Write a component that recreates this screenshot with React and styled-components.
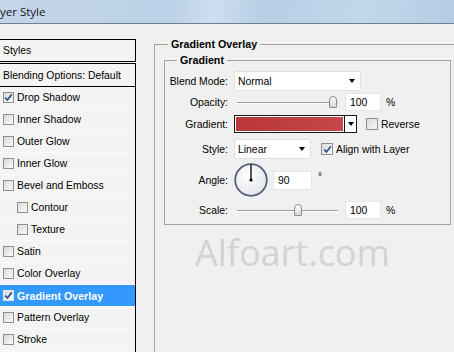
import styled, { createGlobalStyle } from "styled-components";

const GlobalStyle = createGlobalStyle`
  html, body { margin: 0; padding: 0; }
  body {
    width: 454px;
    height: 352px;
    overflow: hidden;
    background: #f0f0f0;
    font-family: "Liberation Sans", Arial, sans-serif;
    font-size: 10.4px;
    color: #000;
  }
`;

const Window = styled.div`
  width: 454px;
  height: 352px;
  display: flex;
  flex-direction: column;
  overflow: hidden;
`;

const TitleBar = styled.div`
  flex: none;
  height: 23px;
  border-bottom: 1px solid #6f7f8e;
  background: linear-gradient(100deg, #c3d5e9 0%, #bcd1e7 38%, #cddef0 47%, #b8cee5 58%, #c3d7eb 80%, #b6cbe3 100%);
  display: flex;
  align-items: center;
  font-family: "Open Sans", sans-serif;
  font-size: 11.5px;
  color: #151515;
`;

const Body = styled.div`
  flex: 1;
  min-height: 0;
  display: flex;
`;

const LeftCol = styled.div`
  flex: none;
  width: 136px;
  padding-top: 15px;
  display: flex;
  flex-direction: column;
`;

const HeadBox = styled.div`
  box-sizing: border-box;
  height: ${(p) => p.$h}px;
  margin-top: ${(p) => p.$mt || 0}px;
  border: 1px solid #000;
  border-left: none;
  background: #f4f4f4;
  display: flex;
  align-items: center;
  padding-left: 3px;
`;

const EffectList = styled.div`
  flex: 1;
  border-right: 1px solid #000;
  background: #f4f4f4;
`;

const EffectRow = styled.div`
  box-sizing: border-box;
  height: 22px;
  display: flex;
  align-items: center;
  gap: 3px;
  padding-left: ${(p) => (p.$indent ? 17 : 3)}px;
  border-bottom: 1px solid #fbfbfb;
  background: ${(p) => (p.$active ? "#3399ff" : "transparent")};
  color: ${(p) => (p.$active ? "#fff" : "#000")};
  font-weight: ${(p) => (p.$active ? "bold" : "normal")};
  font-size: ${(p) => (p.$active ? "10.7px" : "10.4px")};
`;

const Box = styled.span`
  flex: none;
  box-sizing: border-box;
  width: ${(p) => p.$size}px;
  height: ${(p) => p.$size}px;
  border: 1px solid ${(p) => (p.$light ? "#dbe6f5" : "#8f8f8f")};
  background: linear-gradient(135deg, #d9d9d9, #fbfbfb);
  display: inline-flex;
  align-items: center;
  justify-content: center;
`;

const RightCol = styled.div`
  flex: none;
  margin-left: 18px;
  padding-top: 13px;
`;

const Group = styled.fieldset`
  margin: ${(p) => (p.$inner ? "2px 0 0 9px" : "0")};
  padding: 0 0 ${(p) => (p.$inner ? 4 : 0)}px 0;
  box-sizing: border-box;
  width: ${(p) => (p.$inner ? "287px" : "330px")};
  height: ${(p) => (p.$inner ? "auto" : "340px")};
  min-width: 0;
  border: 1px solid #a3a3a3;
`;

const Legend = styled.legend`
  margin-left: ${(p) => (p.$inner ? 12 : 13)}px;
  padding: 0 3px;
  font-weight: bold;
  font-size: 10.7px;
  line-height: 14px;
`;

const Row = styled.div`
  display: flex;
  align-items: center;
  height: ${(p) => p.$h || 20}px;
  margin-top: ${(p) => p.$mt || 0}px;
`;

const Label = styled.span`
  flex: none;
  width: 63px;
  margin-right: 6px;
  text-align: right;
`;

const Select = styled.div`
  box-sizing: border-box;
  width: ${(p) => p.$w}px;
  height: 20px;
  background: #fff;
  border: 1px solid #e0e0e0;
  border-radius: 2px;
  display: flex;
  align-items: center;
  justify-content: space-between;
  padding: 0 5px 0 3px;
`;

const Arrow = styled.span`
  width: 0;
  height: 0;
  border-left: 3.5px solid transparent;
  border-right: 3.5px solid transparent;
  border-top: 4px solid #000;
`;

const Slider = styled.div`
  position: relative;
  width: 104px;
  height: 20px;
  display: flex;
  align-items: center;
`;

const Track = styled.div`
  flex: 1;
  margin-left: 3px;
  height: 1px;
  background: #9c9c9c;
  box-shadow: 0 1px 0 #fff;
`;

const Thumb = styled.span`
  position: absolute;
  top: 4px;
  box-sizing: border-box;
  width: 8px;
  height: 12px;
  border: 1px solid #8d8d8d;
  border-radius: 4px 4px 1px 1px;
  background: linear-gradient(#ffffff, #d6d6d6);
`;

const Field = styled.div`
  box-sizing: border-box;
  width: ${(p) => p.$w}px;
  height: ${(p) => p.$h || 18}px;
  margin-left: ${(p) => p.$ml}px;
  background: #fff;
  border: 1px solid #e6e6e6;
  display: flex;
  align-items: center;
  padding-left: 4px;
`;

const Unit = styled.span`
  margin-left: 5px;
`;

const Swatch = styled.div`
  box-sizing: border-box;
  width: 111px;
  height: 18px;
  border: 1px solid #1a1a1a;
  padding: 1px;
  background: #fff;

  div {
    height: 100%;
    background: linear-gradient(90deg, #b93639, #c5474a);
  }
`;

const SwatchButton = styled.div`
  box-sizing: border-box;
  width: 12px;
  height: 18px;
  border: 1px solid #1a1a1a;
  border-left: none;
  background: #fff;
  display: flex;
  align-items: center;
  justify-content: center;
`;

const Check = styled.label`
  display: flex;
  align-items: center;
  gap: 3px;
  margin-left: ${(p) => p.$ml}px;
`;

const Degree = styled.span`
  align-self: flex-start;
  margin: 8px 0 0 6px;
  font-size: 10px;
`;

const Watermark = styled.div`
  margin: 10px 0 0 40px;
  font-family: "Open Sans", sans-serif;
  font-size: 36px;
  line-height: 36px;
  color: #d3d3d3;
`;

function Tick() {
  return (
    <svg width="9" height="9" viewBox="0 0 9 9">
      <path d="M1.2 4.6 L3.4 7 L7.8 1.4" fill="none" stroke="#34508f" strokeWidth="1.7" />
    </svg>
  );
}

function CheckBox({ checked, size = 11, light }) {
  return <Box $size={size} $light={light}>{checked && <Tick />}</Box>;
}

function Dial() {
  return (
    <svg width="34" height="34" viewBox="0 0 34 34">
      <defs>
        <radialGradient id="dialFill" cx="0.4" cy="0.35" r="0.7">
          <stop offset="0" stopColor="#ffffff" />
          <stop offset="1" stopColor="#e3e5ec" />
        </radialGradient>
      </defs>
      <circle cx="17" cy="17" r="15.8" fill="url(#dialFill)" stroke="#566079" strokeWidth="1.8" />
      <line x1="17" y1="17" x2="17" y2="1.5" stroke="#000" strokeWidth="1.3" />
      <circle cx="17" cy="17" r="1.6" fill="#000" />
    </svg>
  );
}

const effects = [
  { name: "Drop Shadow", checked: true },
  { name: "Inner Shadow" },
  { name: "Outer Glow" },
  { name: "Inner Glow" },
  { name: "Bevel and Emboss" },
  { name: "Contour", indent: true },
  { name: "Texture", indent: true },
  { name: "Satin" },
  { name: "Color Overlay" },
  { name: "Gradient Overlay", checked: true, active: true },
  { name: "Pattern Overlay" },
  { name: "Stroke" },
];

export default function App() {
  return (
    <Window>
      <GlobalStyle />
      <TitleBar>yer Style</TitleBar>
      <Body>
        <LeftCol>
          <HeadBox $h={23}>Styles</HeadBox>
          <HeadBox $h={24} $mt={1}>Blending Options: Default</HeadBox>
          <EffectList>
            {effects.map((e) => (
              <EffectRow key={e.name} $indent={e.indent} $active={e.active}>
                <CheckBox checked={e.checked} light={e.active} />
                {e.name}
              </EffectRow>
            ))}
          </EffectList>
        </LeftCol>

        <RightCol>
          <Group>
            <Legend>Gradient Overlay</Legend>
            <Group $inner>
              <Legend $inner>Gradient</Legend>

              <Row $mt={4}>
                <Label>Blend Mode:</Label>
                <Select $w={127}>Normal<Arrow /></Select>
              </Row>

              <Row $mt={1}>
                <Label>Opacity:</Label>
                <Slider>
                  <Track />
                  <Thumb style={{ left: 95 }} />
                </Slider>
                <Field $w={36} $ml={7}>100</Field>
                <Unit>%</Unit>
              </Row>

              <Row $mt={2}>
                <Label>Gradient:</Label>
                <Swatch><div /></Swatch>
                <SwatchButton><Arrow /></SwatchButton>
                <Check $ml={9}><CheckBox size={12} />Reverse</Check>
              </Row>

              <Row $mt={5}>
                <Label>Style:</Label>
                <Select $w={77}>Linear<Arrow /></Select>
                <Check $ml={10}><CheckBox size={12} checked />Align with Layer</Check>
              </Row>

              <Row $h={34} $mt={4}>
                <Label>Angle:</Label>
                <Dial />
                <Field $w={39} $h={19} $ml={5}>90</Field>
                <Degree>°</Degree>
              </Row>

              <Row $mt={3}>
                <Label>Scale:</Label>
                <Slider>
                  <Track />
                  <Thumb style={{ left: 60 }} />
                </Slider>
                <Field $w={36} $ml={7}>100</Field>
                <Unit>%</Unit>
              </Row>
            </Group>
            <Watermark>Alfoart.com</Watermark>
          </Group>
        </RightCol>
      </Body>
    </Window>
  );
}
